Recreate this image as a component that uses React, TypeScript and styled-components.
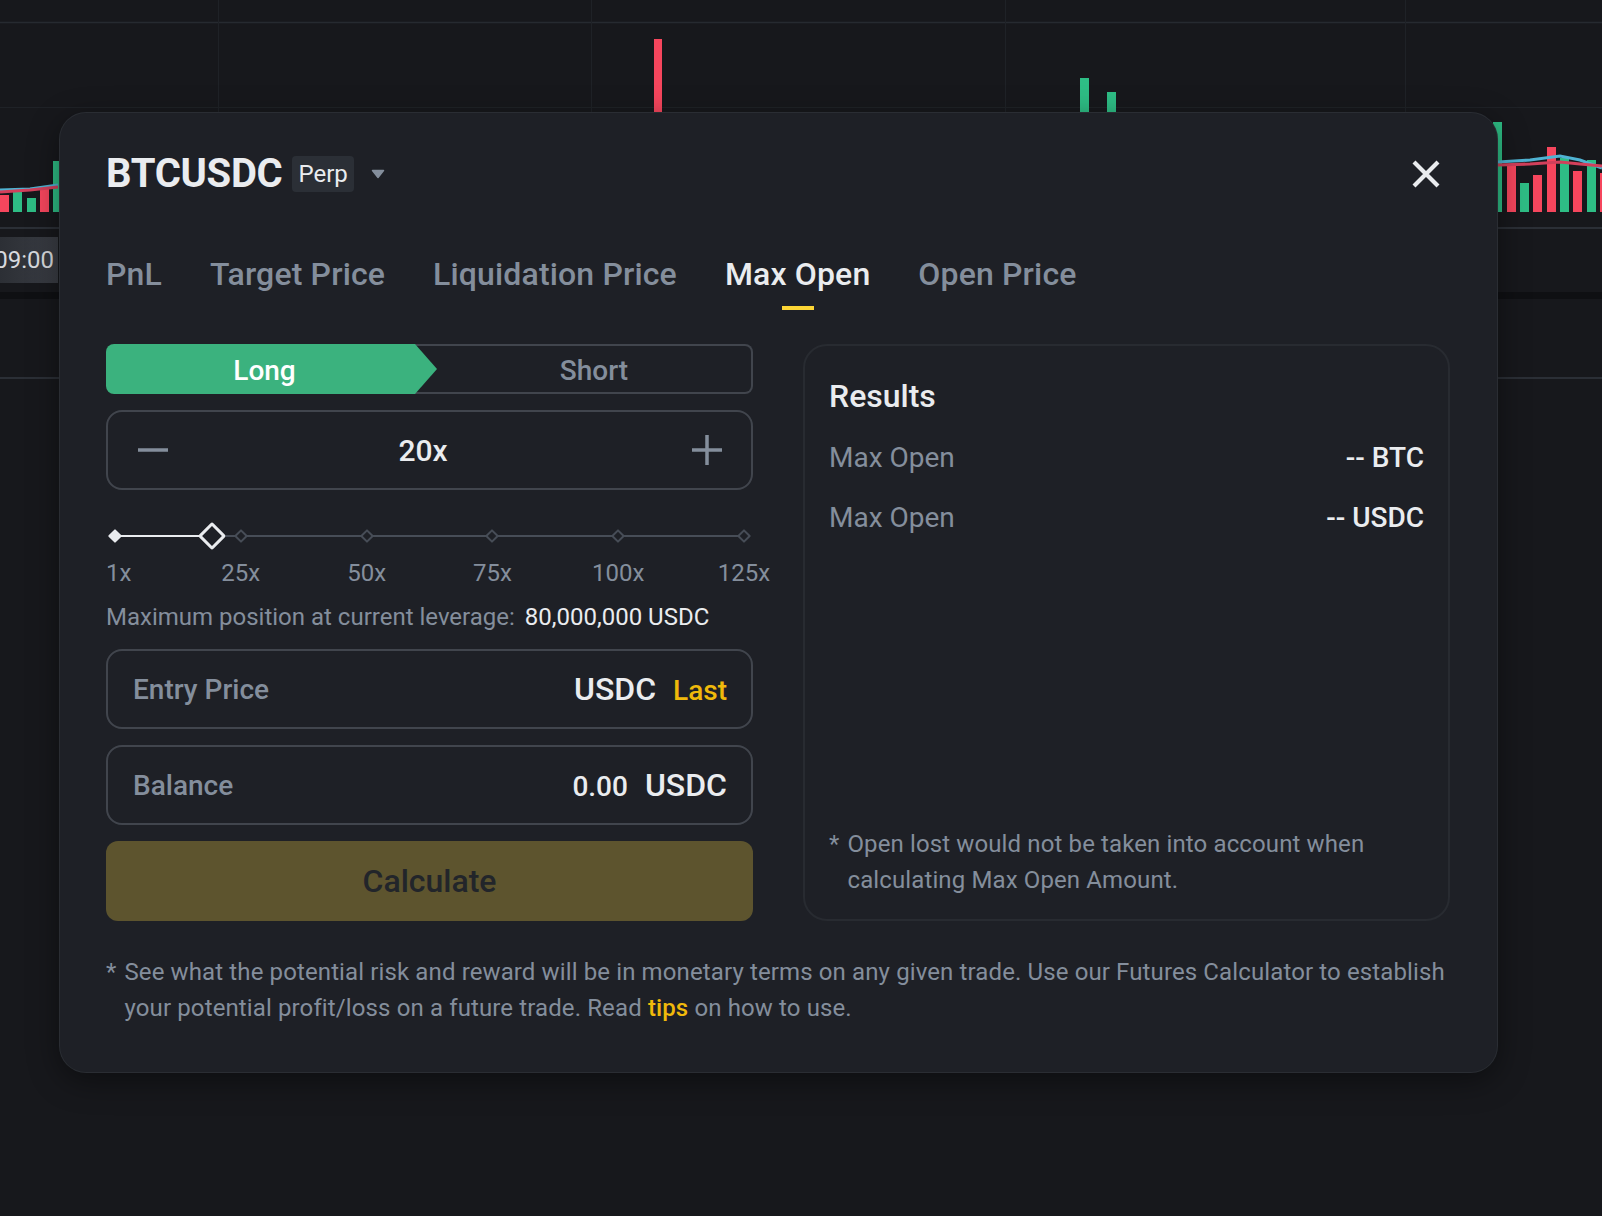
import { FC } from 'react';
import styled, { createGlobalStyle } from 'styled-components';

const GlobalStyle = createGlobalStyle`
  html, body {
    margin: 0;
    padding: 0;
    background: #17181c;
  }
  body {
    font-family: Roboto, "Noto Sans", "Liberation Sans", sans-serif;
    color: #eaecef;
  }
  * {
    box-sizing: border-box;
  }
`;

const MARKS = [
  { label: '1x', pos: 0 },
  { label: '25x', pos: 20 },
  { label: '50x', pos: 40 },
  { label: '75x', pos: 60 },
  { label: '100x', pos: 80 },
  { label: '125x', pos: 100 },
];
const LEVERAGE_POS = 15.4;

const TABS = ['PnL', 'Target Price', 'Liquidation Price', 'Max Open', 'Open Price'];

// candles peeking out around the modal
const BARS = [
  { x: 0, top: 195, up: false },
  { x: 13, top: 190, up: true },
  { x: 27, top: 198, up: true },
  { x: 40, top: 186, up: false },
  { x: 53, top: 161, up: true },
  { x: 1493, top: 122, up: true },
  { x: 1507, top: 164, up: false },
  { x: 1520, top: 183, up: true },
  { x: 1533, top: 175, up: false },
  { x: 1547, top: 147, up: false },
  { x: 1560, top: 158, up: true },
  { x: 1573, top: 171, up: false },
  { x: 1587, top: 160, up: true },
  { x: 1600, top: 173, up: false },
];

const ChartBackdrop: FC = () => (
  <ChartSvg viewBox='0 0 1602 1216' preserveAspectRatio='none'>
    <line x1='0' y1='22.5' x2='1602' y2='22.5' stroke='#262a30' strokeWidth='1.5' />
    <line x1='0' y1='107.5' x2='1602' y2='107.5' stroke='#1f2227' strokeWidth='1' />
    {[218, 591, 1005, 1405].map((x) => (
      <line key={x} x1={x + 0.5} y1='0' x2={x + 0.5} y2='378' stroke='#1f2227' strokeWidth='1' />
    ))}
    <rect x='654' y='39' width='8' height='90' fill='#f6465d' />
    <rect x='1080' y='78' width='9' height='50' fill='#2ebd85' />
    <rect x='1107' y='92' width='9' height='40' fill='#2ebd85' />
    {BARS.map((b) => (
      <rect key={b.x} x={b.x} y={b.top} width='9' height={212 - b.top} fill={b.up ? '#2ebd85' : '#f6465d'} />
    ))}
    <polyline points='0,190 30,189 58,185' fill='none' stroke='#4fb3d3' strokeWidth='3' />
    <polyline points='0,192 30,190 58,187' fill='none' stroke='#d2405b' strokeWidth='3' />
    <polyline points='1498,162 1530,160 1560,156 1580,160 1602,168' fill='none' stroke='#4fb3d3' strokeWidth='3' />
    <polyline points='1498,165 1530,164 1560,162 1580,164 1602,166' fill='none' stroke='#d2405b' strokeWidth='3' />
    <line x1='0' y1='228' x2='1602' y2='228' stroke='#2b2f36' strokeWidth='2' />
    <rect x='0' y='292' width='1602' height='7' fill='#0f1013' />
    <line x1='0' y1='378' x2='1602' y2='378' stroke='#2b2f36' strokeWidth='2' />
  </ChartSvg>
);

const CaretIcon: FC = () => (
  <svg width='14' height='10' viewBox='0 0 14 10'>
    <path d='M1.5 1.5h11L7 8.5z' fill='#848e9c' stroke='#848e9c' strokeWidth='1.5' strokeLinejoin='round' />
  </svg>
);

const CloseIcon: FC = () => (
  <svg width='30' height='30' viewBox='0 0 30 30'>
    <path d='M3 3L27 27M27 3L3 27' stroke='#eaecef' strokeWidth='4.2' />
  </svg>
);

const MinusIcon: FC = () => (
  <svg width='32' height='32' viewBox='0 0 32 32'>
    <path d='M1 16h30' stroke='#848e9c' strokeWidth='3.5' />
  </svg>
);

const PlusIcon: FC = () => (
  <svg width='32' height='32' viewBox='0 0 32 32'>
    <path d='M1 16h30M16 1v30' stroke='#848e9c' strokeWidth='3.5' />
  </svg>
);

const LeverageSlider: FC = () => (
  <SliderWrap>
    <Track>
      <Rail />
      <RailFill style={{ width: `${LEVERAGE_POS}%` }} />
      {MARKS.map((m) => (
        <Mark key={m.label} style={{ left: `${m.pos}%` }} active={m.pos <= LEVERAGE_POS} />
      ))}
      <Thumb style={{ left: `${LEVERAGE_POS}%` }} />
    </Track>
    <MarkLabels>
      {MARKS.map((m, i) => (
        <MarkLabel key={m.label} style={{ left: `${m.pos}%` }} first={i === 0}>
          {m.label}
        </MarkLabel>
      ))}
    </MarkLabels>
  </SliderWrap>
);

export default function App() {
  return (
    <Page>
      <GlobalStyle />
      <ChartBackdrop />
      <TimeTag>09:00</TimeTag>

      <Modal>
        <Header>
          <Symbol>BTCUSDC</Symbol>
          <Badge>Perp</Badge>
          <CaretButton>
            <CaretIcon />
          </CaretButton>
          <CloseButton>
            <CloseIcon />
          </CloseButton>
        </Header>

        <Tabs>
          {TABS.map((t) => (
            <Tab key={t} active={t === 'Max Open'}>
              {t}
              <TabBar active={t === 'Max Open'} />
            </Tab>
          ))}
        </Tabs>

        <Body>
          <FormColumn>
            <SideToggle>
              <LongButton>Long</LongButton>
              <ShortButton>Short</ShortButton>
            </SideToggle>

            <LeverageBox>
              <StepButton>
                <MinusIcon />
              </StepButton>
              <LeverageValue>20x</LeverageValue>
              <StepButton>
                <PlusIcon />
              </StepButton>
            </LeverageBox>

            <LeverageSlider />

            <MaxPosition>
              Maximum position at current leverage: <strong>80,000,000 USDC</strong>
            </MaxPosition>

            <Field>
              <FieldLabel>Entry Price</FieldLabel>
              <FieldRight>
                <Unit>USDC</Unit>
                <LastLink>Last</LastLink>
              </FieldRight>
            </Field>

            <Field>
              <FieldLabel>Balance</FieldLabel>
              <FieldRight>
                <FieldNumber>0.00</FieldNumber>
                <Unit>USDC</Unit>
              </FieldRight>
            </Field>

            <CalcButton>Calculate</CalcButton>
          </FormColumn>

          <ResultsCard>
            <ResultsTitle>Results</ResultsTitle>
            <ResultRow>
              <span>Max Open</span>
              <ResultValue>-- BTC</ResultValue>
            </ResultRow>
            <ResultRow>
              <span>Max Open</span>
              <ResultValue>-- USDC</ResultValue>
            </ResultRow>
            <Footnote inCard>
              <span>*</span>
              <p>Open lost would not be taken into account when calculating Max Open Amount.</p>
            </Footnote>
          </ResultsCard>
        </Body>

        <Footnote>
          <span>*</span>
          <p>
            See what the potential risk and reward will be in monetary terms on any given trade. Use our Futures
            Calculator to establish your potential profit/loss on a future trade. Read <Tips>tips</Tips> on how to
            use.
          </p>
        </Footnote>
      </Modal>
    </Page>
  );
}

const Page = styled.div`
  position: relative;
  width: 100vw;
  height: 100vh;
  overflow: hidden;
  background: #17181c;
`;

const ChartSvg = styled.svg`
  position: absolute;
  inset: 0;
  width: 100%;
  height: 100%;
`;

const TimeTag = styled.div`
  position: absolute;
  left: 0;
  top: 237px;
  width: 58px;
  height: 46px;
  padding-right: 4px;
  display: flex;
  align-items: center;
  justify-content: flex-end;
  overflow: hidden;
  white-space: nowrap;
  background: linear-gradient(90deg, #2c2f35, #3a3d44);
  font-size: 24px;
  color: #d8dade;
`;

const Modal = styled.div`
  position: absolute;
  left: 60px;
  top: 113px;
  width: 1437px;
  padding: 37px 47px 46px 46px;
  background: #1e2026;
  border-radius: 26px;
  box-shadow: 0 0 0 1px #2a2d33, 0 8px 32px rgba(0, 0, 0, 0.45);
`;

const Header = styled.div`
  display: flex;
  align-items: center;
  height: 48px;
`;

const Symbol = styled.h2`
  margin: 0;
  font-size: 40px;
  line-height: 48px;
  font-weight: 700;
  color: #eaecef;
  letter-spacing: -0.3px;
`;

const Badge = styled.span`
  margin-left: 10px;
  height: 36px;
  padding: 0 6px;
  display: inline-flex;
  align-items: center;
  border-radius: 4px;
  background: #2b2f36;
  font-size: 24px;
  color: #eaecef;
`;

const CaretButton = styled.span`
  margin-left: 17px;
  display: inline-flex;
  align-items: center;
`;

const CloseButton = styled.span`
  margin-left: auto;
  width: 48px;
  height: 48px;
  display: flex;
  align-items: center;
  justify-content: center;
`;

const Tabs = styled.div`
  display: flex;
  gap: 48px;
  margin-top: 52px;
`;

const Tab = styled.div<{ active?: boolean }>`
  display: flex;
  flex-direction: column;
  align-items: center;
  font-size: 32px;
  line-height: 48px;
  font-weight: 500;
  letter-spacing: 0.15px;
  color: ${(p) => (p.active ? '#eaecef' : '#848e9c')};
`;

const TabBar = styled.span<{ active?: boolean }>`
  margin-top: 8px;
  width: 32px;
  height: 4px;
  background: ${(p) => (p.active ? '#fcd535' : 'transparent')};
`;

const Body = styled.div`
  margin-top: 34px;
  display: grid;
  grid-template-columns: 647px 1fr;
  column-gap: 50px;
`;

const FormColumn = styled.div`
  display: flex;
  flex-direction: column;
`;

const SideToggle = styled.div`
  display: flex;
  height: 50px;
`;

const LongButton = styled.div`
  position: relative;
  z-index: 1;
  flex: 0 0 331px;
  display: flex;
  align-items: center;
  justify-content: center;
  padding: 3px 14px 0 0;
  background: #3bb27e;
  border-radius: 8px 0 0 8px;
  clip-path: polygon(0 0, calc(100% - 22px) 0, 100% 50%, calc(100% - 22px) 100%, 0 100%);
  font-size: 28px;
  font-weight: 500;
  color: #ffffff;
`;

const ShortButton = styled.div`
  flex: 1;
  margin-left: -30px;
  padding: 3px 0 0 30px;
  display: flex;
  align-items: center;
  justify-content: center;
  border: 2px solid #41454d;
  border-left: none;
  border-radius: 0 8px 8px 0;
  font-size: 28px;
  font-weight: 500;
  color: #848e9c;
`;

const LeverageBox = styled.div`
  margin-top: 16px;
  height: 80px;
  display: flex;
  align-items: center;
  padding: 0 28px 0 29px;
  border: 2px solid #41454d;
  border-radius: 16px;
`;

const StepButton = styled.span`
  display: flex;
  align-items: center;
`;

const LeverageValue = styled.div`
  flex: 1;
  text-align: center;
  padding-right: 14px;
  font-size: 30px;
  font-weight: 500;
  color: #eaecef;
`;

const SliderWrap = styled.div`
  padding-top: 39px;
`;

const Track = styled.div`
  position: relative;
  height: 14px;
  margin: 0 9px;
`;

const Rail = styled.div`
  position: absolute;
  left: 0;
  right: 0;
  top: 6px;
  height: 2px;
  background: #474d57;
`;

const RailFill = styled.div`
  position: absolute;
  left: 0;
  top: 6px;
  height: 2px;
  background: #eaecef;
`;

const Mark = styled.span<{ active?: boolean }>`
  position: absolute;
  top: 50%;
  width: 10px;
  height: 10px;
  transform: translate(-50%, -50%) rotate(45deg);
  border: 2px solid ${(p) => (p.active ? '#eaecef' : '#474d57')};
  background: ${(p) => (p.active ? '#eaecef' : '#1e2026')};
  border-radius: 1px;
`;

const Thumb = styled.span`
  position: absolute;
  top: 50%;
  width: 20px;
  height: 20px;
  transform: translate(-50%, -50%) rotate(45deg);
  border: 3px solid #eaecef;
  background: #1e2026;
  border-radius: 2px;
`;

const MarkLabels = styled.div`
  position: relative;
  margin: 14px 9px 0;
  height: 32px;
`;

const MarkLabel = styled.span<{ first?: boolean }>`
  position: absolute;
  top: 0;
  transform: ${(p) => (p.first ? 'translateX(-9px)' : 'translateX(-50%)')};
  font-size: 24px;
  line-height: 32px;
  color: #848e9c;
  white-space: nowrap;
`;

const MaxPosition = styled.div`
  margin-top: 12px;
  font-size: 24px;
  line-height: 32px;
  color: #848e9c;
  white-space: nowrap;

  strong {
    margin-left: 4px;
    font-weight: 400;
    color: #eaecef;
  }
`;

const Field = styled.div`
  margin-top: 16px;
  height: 80px;
  display: flex;
  align-items: center;
  justify-content: space-between;
  padding: 0 24px 0 25px;
  border: 2px solid #41454d;
  border-radius: 16px;

  &:first-of-type {
    margin-top: 17px;
  }
`;

const FieldLabel = styled.span`
  font-size: 28px;
  font-weight: 500;
  color: #848e9c;
`;

const FieldRight = styled.div`
  display: flex;
  align-items: baseline;
  gap: 17px;
`;

const Unit = styled.span`
  font-size: 32px;
  font-weight: 500;
  color: #eaecef;
`;

const FieldNumber = styled.span`
  font-size: 28px;
  font-weight: 500;
  color: #eaecef;
`;

const LastLink = styled.span`
  font-size: 28px;
  font-weight: 500;
  color: #f0b90b;
`;

const CalcButton = styled.button`
  margin-top: 16px;
  height: 80px;
  border: none;
  border-radius: 12px;
  background: #5d542e;
  font-family: inherit;
  font-size: 32px;
  font-weight: 500;
  color: #22252a;
`;

const ResultsCard = styled.div`
  display: flex;
  flex-direction: column;
  padding: 28px 24px 21px;
  border: 2px solid #282b31;
  border-radius: 24px;
`;

const ResultsTitle = styled.h3`
  margin: 0;
  font-size: 32px;
  line-height: 44px;
  font-weight: 500;
  color: #eaecef;
`;

const ResultRow = styled.div`
  display: flex;
  justify-content: space-between;
  margin-top: 22px;
  font-size: 28px;
  line-height: 36px;
  color: #848e9c;

  & + & {
    margin-top: 24px;
  }
`;

const ResultValue = styled.span`
  font-weight: 500;
  color: #eaecef;
`;

const Footnote = styled.div<{ inCard?: boolean }>`
  display: flex;
  gap: 8px;
  margin-top: ${(p) => (p.inCard ? 'auto' : '33px')};
  padding-right: ${(p) => (p.inCard ? '20px' : '0')};
  font-size: 24px;
  line-height: 36px;
  letter-spacing: 0.12px;
  color: #848e9c;

  p {
    margin: 0;
  }
`;

const Tips = styled.span`
  font-weight: 500;
  color: #f0b90b;
`;
